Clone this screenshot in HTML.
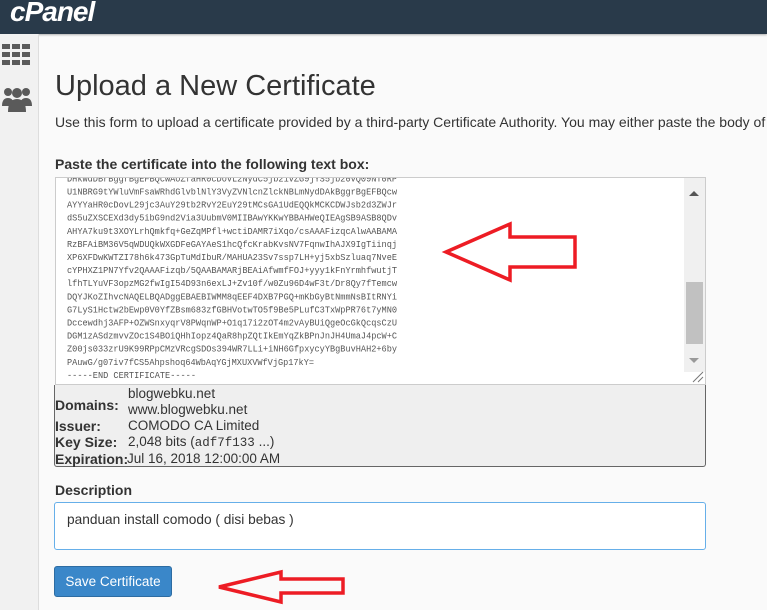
<!DOCTYPE html>
<html><head><style>
*{margin:0;padding:0;box-sizing:border-box}
body{width:767px;height:610px;overflow:hidden;background:#fafafa;font-family:"Liberation Sans",sans-serif;color:#333;position:relative}
.hdr{position:absolute;left:0;top:0;width:767px;height:34px;background:#293a4a;box-shadow:0 1px 2px rgba(0,0,0,.3)}
.logo{position:absolute;left:10px;top:-4px;color:#fff;font:italic bold 28px "Liberation Sans",sans-serif;letter-spacing:-1px}
.side{position:absolute;left:0;top:34px;width:39px;height:576px;background:#f1f1f1;border-right:1px solid #ddd}
.a{position:absolute}
h1{position:absolute;left:55px;top:70px;font-weight:normal;font-size:29px;color:#333}
.sub{position:absolute;left:55px;top:114px;font-size:14px;white-space:nowrap;color:#333}
.lbl{position:absolute;left:55px;top:156px;font-weight:bold;font-size:14px}
.ta{position:absolute;left:55px;top:177px;width:651px;height:208px;background:#fff;border:1px solid #ccc;overflow:hidden}
.cert text{font-family:"Liberation Mono",monospace;font-size:9.5px;fill:#555}
.sb{position:absolute;right:0;top:0;width:21px;height:194px;background:#f0f0f0}
.info{position:absolute;left:54px;top:385px;width:652px;height:82px;background:#efefef;border:1px solid #666;border-top:none;border-radius:0 0 3px 3px;font-size:13.5px}
.info div{position:absolute;white-space:nowrap}
.info b{font-size:14px}
.dl{position:absolute;left:55px;top:482px;font-weight:bold;font-size:14px}
.desc{position:absolute;left:54px;top:502px;width:652px;height:48px;background:#fff;border:1px solid #66afe9;border-radius:3px;font-size:13.7px;padding:9px 12px}
.btn{position:absolute;left:54px;top:566px;width:118px;height:31px;background:#3a87c9;border:1px solid #2d6ca2;border-radius:3px;color:#fff;font-size:13.5px;text-align:center;line-height:29px}
</style></head><body>
<div class="hdr"><div class="logo">cPanel</div></div>
<div class="side">
<svg class="a" style="left:2px;top:10px" width="28" height="22"><g fill="#5a5a5a"><rect x="0" y="0" width="8" height="5"/><rect x="10" y="0" width="8" height="5"/><rect x="20" y="0" width="8" height="5"/><rect x="0" y="8" width="8" height="5"/><rect x="10" y="8" width="8" height="5"/><rect x="20" y="8" width="8" height="5"/><rect x="0" y="16" width="8" height="5"/><rect x="10" y="16" width="8" height="5"/><rect x="20" y="16" width="8" height="5"/></g></svg>
<svg class="a" style="left:2px;top:52px" width="30" height="26"><g fill="#5a5a5a"><circle cx="6" cy="6" r="4"/><circle cx="24" cy="6" r="4"/><circle cx="15" cy="7" r="5"/><path d="M0 20q0-8 6-8t6 8z"/><path d="M18 20q0-8 6-8t6 8z"/><path d="M6 26q0-13 9-13t9 13z"/></g></svg>
</div>
<h1>Upload a New Certificate</h1>
<div class="sub">Use this form to upload a certificate provided by a third-party Certificate Authority. You may either paste the body of the</div>
<div class="lbl">Paste the certificate into the following text box:</div>
<div class="ta">
<svg class="cert a" style="left:0;top:0" width="630" height="206">
<text x="11" y="3.4" textLength="330" lengthAdjust="spacingAndGlyphs">DHkwdDBrBggrBgEFBQcwAoZfaHR0cDovL2NydC5jb21vZG9jYS5jb20vQ09NT0RP</text>
<text x="11" y="16.5" textLength="330" lengthAdjust="spacingAndGlyphs">U1NBRG9tYWluVmFsaWRhdGlvblNlY3VyZVNlcnZlckNBLmNydDAkBggrBgEFBQcw</text>
<text x="11" y="29.6" textLength="330" lengthAdjust="spacingAndGlyphs">AYYYaHR0cDovL29jc3AuY29tb2RvY2EuY29tMCsGA1UdEQQkMCKCDWJsb2d3ZWJr</text>
<text x="11" y="42.7" textLength="330" lengthAdjust="spacingAndGlyphs">dS5uZXSCEXd3dy5ibG9nd2Via3UubmV0MIIBAwYKKwYBBAHWeQIEAgSB9ASB8QDv</text>
<text x="11" y="55.8" textLength="330" lengthAdjust="spacingAndGlyphs">AHYA7ku9t3XOYLrhQmkfq+GeZqMPfl+wctiDAMR7iXqo/csAAAFizqcAlwAABAMA</text>
<text x="11" y="68.9" textLength="330" lengthAdjust="spacingAndGlyphs">RzBFAiBM36V5qWDUQkWXGDFeGAYAeS1hcQfcKrabKvsNV7FqnwIhAJX9IgTiinqj</text>
<text x="11" y="82" textLength="330" lengthAdjust="spacingAndGlyphs">XP6XFDwKWTZI78h6k473GpTuMdIbuR/MAHUA23Sv7ssp7LH+yj5xbSzluaq7NveE</text>
<text x="11" y="95.1" textLength="330" lengthAdjust="spacingAndGlyphs">cYPHXZ1PN7Yfv2QAAAFizqb/5QAABAMARjBEAiAfwmfFOJ+yyy1kFnYrmhfwutjT</text>
<text x="11" y="108.2" textLength="330" lengthAdjust="spacingAndGlyphs">lfhTLYuVF3opzMG2fwIgI54D93n6exLJ+Zv10f/w0Zu96D4wF3t/Dr8Qy7fTemcw</text>
<text x="11" y="121.3" textLength="330" lengthAdjust="spacingAndGlyphs">DQYJKoZIhvcNAQELBQADggEBAEBIWMM8qEEF4DXB7PGQ+mKbGyBtNmmNsBItRNYi</text>
<text x="11" y="134.4" textLength="330" lengthAdjust="spacingAndGlyphs">G7LyS1Hctw2bEwp0V0YfZBsm683zfGBHVotwTO5f9Be5PLufC3TxWpPR76t7yMN0</text>
<text x="11" y="147.5" textLength="330" lengthAdjust="spacingAndGlyphs">Dccewdhj3AFP+OZWSnxyqrV8PWqnWP+O1q17i2zOT4m2vAyBUiQgeOcGkQcqsCzU</text>
<text x="11" y="160.6" textLength="330" lengthAdjust="spacingAndGlyphs">DGM1zASdzmvvZOc1S4BOiQHhIopz4QaR8hpZQtIkEmYqZkBPnJnJH4UmaJ4pcW+C</text>
<text x="11" y="173.7" textLength="330" lengthAdjust="spacingAndGlyphs">Z00js033zrU9K99RPpCMzVRcgSDOs394WR7LLi+iNH6GfpxycyYBgBuvHAH2+6by</text>
<text x="11" y="186.8" textLength="247" lengthAdjust="spacingAndGlyphs">PAuwG/g07iv7fCS5Ahpshoq64WbAqYGjMXUXVWfVjGp17kY=</text>
<text x="11" y="199.9" textLength="129" lengthAdjust="spacingAndGlyphs">-----END CERTIFICATE-----</text>
</svg>
<div class="sb"><div class="a" style="left:5px;top:13px;width:0;height:0;border:5px solid transparent;border-bottom-color:#555;border-top:none"></div><div class="a" style="left:2px;top:104px;width:17px;height:62px;background:#c1c1c1"></div><div class="a" style="left:5px;top:180px;width:0;height:0;border:5px solid transparent;border-top-color:#999;border-bottom:none"></div></div>
<svg class="a" style="right:1px;bottom:1px" width="19" height="19"><path d="M8 18L18 8M13 18L18 13" stroke="#777"/></svg>
</div>
<div class="info">
<div style="left:0;top:12px"><b>Domains:</b></div>
<div style="left:73px;top:1px">blogwebku.net</div>
<div style="left:73px;top:17px">www.blogwebku.net</div>
<div style="left:0;top:33px"><b>Issuer:</b></div><div style="left:73px;top:33px">COMODO CA Limited</div>
<div style="left:0;top:49px"><b>Key Size:</b></div><div style="left:73px;top:49px">2,048 bits (<span style="font-family:'Liberation Mono',monospace;font-size:12.5px">adf7f133</span> ...)</div>
<div style="left:0;top:66px"><b>Expiration:</b></div><div style="left:72px;top:66px">Jul 16, 2018 12:00:00 AM</div>
</div>
<div class="dl">Description</div>
<div class="desc">panduan install comodo ( disi bebas )</div>
<div class="btn">Save Certificate</div>
<svg class="a" style="left:0;top:0" width="767" height="610"><g fill="none" stroke="#ed1c24" stroke-width="3.5" stroke-linejoin="miter">
<path d="M446 252L510 224V237H575V267H510V280Z"/>
<path d="M219 587L281 572V579H343V593H281V602Z"/></g></svg>
</body></html>
